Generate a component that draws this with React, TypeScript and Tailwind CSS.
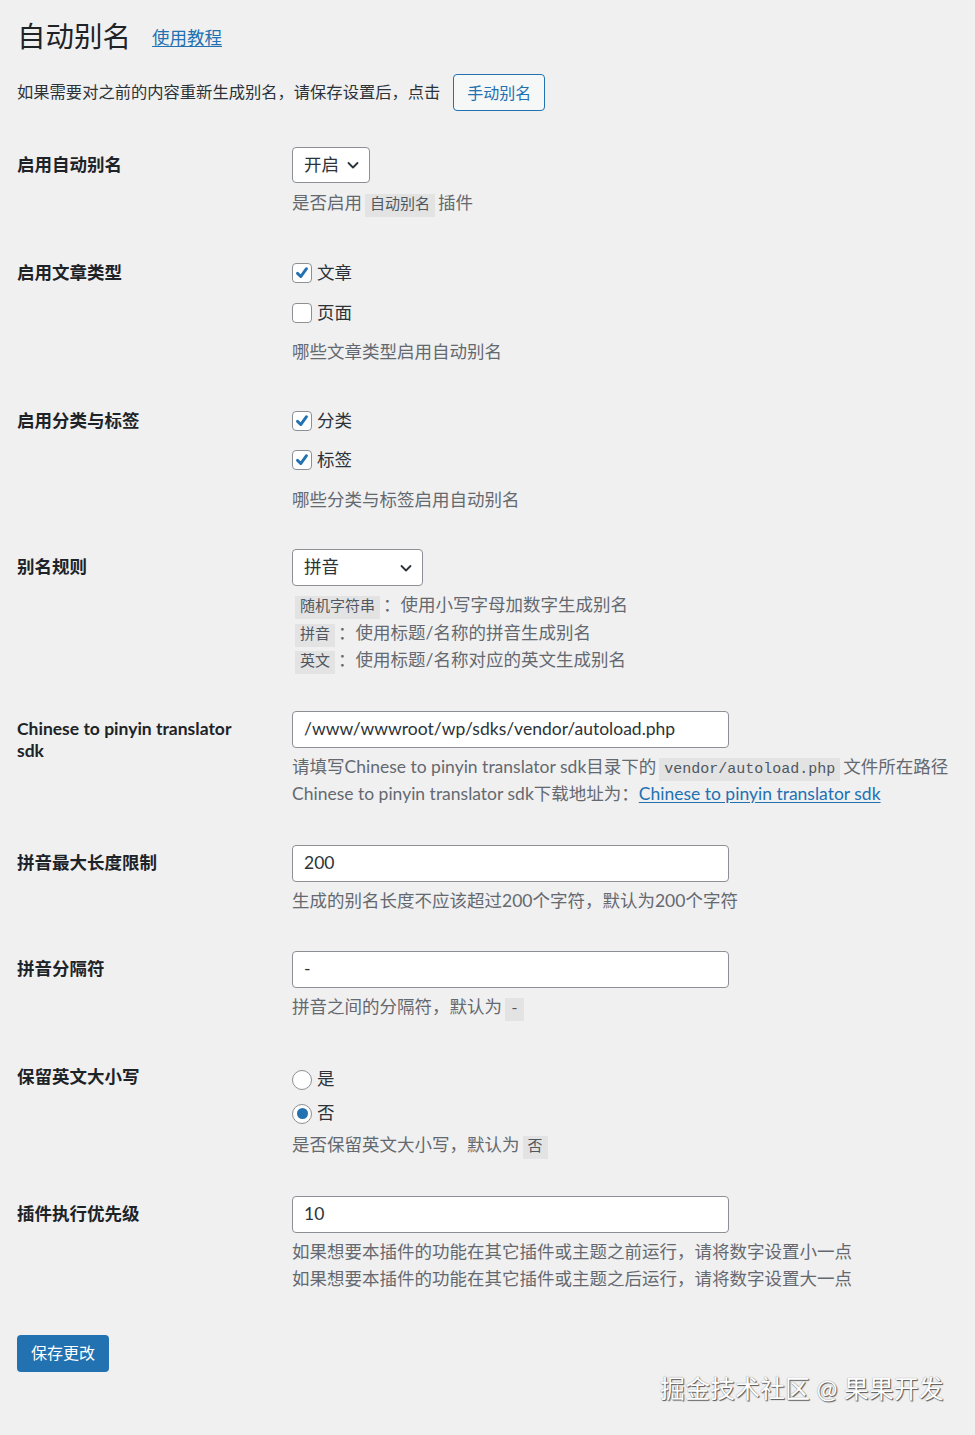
import type { ReactNode } from "react";

const font = { fontFamily: 'Lato, "Noto Sans CJK SC", sans-serif' };

const Code = ({ children }: { children: ReactNode }) => (
	<code className="bg-[#e3e3e4] px-[5px] py-[3px] mx-[3px] text-[15px] leading-none text-[#50575e] font-['Liberation_Mono','Noto_Sans_CJK_SC',monospace]">
		{children}
	</code>
);

const Chevron = () => (
	<svg width="16" height="16" viewBox="0 0 16 16" fill="none" className="shrink-0">
		<path d="M3.5 6 L8 10.5 L12.5 6" stroke="#2c3338" strokeWidth="1.8" strokeLinecap="round" strokeLinejoin="round" />
	</svg>
);

const Checkbox = ({ checked }: { checked?: boolean }) => (
	<span className="w-[20px] h-[20px] rounded-[4px] border border-[#8c8f94] bg-white flex items-center justify-center shrink-0">
		{checked && (
			<svg width="18" height="18" viewBox="0 0 20 20">
				<path d="M15 5.2 L8.6 14 L5 10.4" stroke="#2271b1" strokeWidth="3.2" fill="none" strokeLinecap="round" strokeLinejoin="round" />
			</svg>
		)}
	</span>
);

const Radio = ({ checked }: { checked?: boolean }) => (
	<span className="w-[20px] h-[20px] rounded-full border border-[#8c8f94] bg-white flex items-center justify-center shrink-0">
		{checked && <span className="w-[11px] h-[11px] rounded-full bg-[#2271b1]" />}
	</span>
);

const Row = ({
	label,
	labelMt,
	pt,
	pb,
	children,
}: {
	label: ReactNode;
	labelMt: string;
	pt: string;
	pb: string;
	children: ReactNode;
}) => (
	<div className={`flex ${pt} ${pb}`}>
		<div className="w-[275px] shrink-0 pr-[30px]">
			<div className={`text-[17.5px] font-bold text-[#1d2327] leading-[22px] w-[235px] ${labelMt}`}>{label}</div>
		</div>
		<div className="flex-1 min-w-0">{children}</div>
	</div>
);

const Desc = ({ children, className = "" }: { children: ReactNode; className?: string }) => (
	<p className={`text-[17.5px] text-[#646970] leading-[27px] whitespace-nowrap ${className}`}>{children}</p>
);

const TextInput = ({ value }: { value: string }) => (
	<div className="w-[437px] h-[37px] bg-white border border-[#8c8f94] rounded-[4px] px-[11px] flex items-center text-[17.5px] text-[#2c3338]">
		{value}
	</div>
);

const Check = ({ checked, label, className = "" }: { checked?: boolean; label: string; className?: string }) => (
	<label className={`flex items-center gap-[5px] h-[28px] text-[17.5px] text-[#2c3338] ${className}`}>
		<Checkbox checked={checked} />
		{label}
	</label>
);

export default function App() {
	return (
		<div className="min-h-screen bg-[#f0f0f1] relative" style={font}>
			<div className="px-[17px] pt-[14px]">
				<div className="flex items-center h-[44px]">
					<h1 className="text-[28.5px] text-[#1d2327] font-normal leading-none">自动别名</h1>
					<a className="ml-[21px] mt-[4px] text-[17.5px] text-[#2271b1] underline underline-offset-2">使用教程</a>
				</div>
				<div className="flex items-center mt-[16px]">
					<span className="text-[16.3px] text-[#2c3338]">如果需要对之前的内容重新生成别名，请保存设置后，点击</span>
					<button className="ml-[13px] h-[37px] px-[13px] rounded-[4px] border border-[#2271b1] bg-[#f6f7f7] text-[16px] text-[#2271b1]">
						手动别名
					</button>
				</div>

				<div className="mt-[36px]">
					<Row label="启用自动别名" labelMt="mt-[7px]" pt="pt-0" pb="pb-[20px]">
						<div className="w-[78px] h-[36px] bg-white border border-[#8c8f94] rounded-[4px] pl-[11px] pr-[8px] flex items-center justify-between text-[17.5px] text-[#2c3338]">
							开启
							<Chevron />
						</div>
						<Desc className="mt-[6px]">
							是否启用<Code>自动别名</Code>插件
						</Desc>
					</Row>

					<Row label="启用文章类型" labelMt="mt-[3px]" pt="pt-[23px]" pb="pb-[20px]">
						<Check checked label="文章" />
						<Check label="页面" className="mt-[12px]" />
						<Desc className="mt-[11px]">哪些文章类型启用自动别名</Desc>
					</Row>

					<Row label="启用分类与标签" labelMt="mt-[3px]" pt="pt-[22px]" pb="pb-[20px]">
						<Check checked label="分类" />
						<Check checked label="标签" className="mt-[11px]" />
						<Desc className="mt-[12px]">哪些分类与标签启用自动别名</Desc>
					</Row>

					<Row label="别名规则" labelMt="mt-[7px]" pt="pt-[16px]" pb="pb-[20px]">
						<div className="w-[131px] h-[37px] bg-white border border-[#8c8f94] rounded-[4px] pl-[11px] pr-[8px] flex items-center justify-between text-[17.5px] text-[#2c3338]">
							拼音
							<Chevron />
						</div>
						<div className="mt-[5px] text-[17.5px] text-[#646970] leading-[27.5px]">
							<p>
								<Code>随机字符串</Code>：使用小写字母加数字生成别名
							</p>
							<p>
								<Code>拼音</Code>：使用标题/名称的拼音生成别名
							</p>
							<p>
								<Code>英文</Code>：使用标题/名称对应的英文生成别名
							</p>
						</div>
					</Row>

					<Row label="Chinese to pinyin translator sdk" labelMt="mt-[7px]" pt="pt-[17px]" pb="pb-[20px]">
						<TextInput value="/www/wwwroot/wp/sdks/vendor/autoload.php" />
						<Desc className="mt-[5px]">
							请填写Chinese to pinyin translator sdk目录下的<Code>vendor/autoload.php</Code>文件所在路径
						</Desc>
						<Desc>
							Chinese to pinyin translator sdk下载地址为：
							<a className="text-[#2271b1] underline underline-offset-2">Chinese to pinyin translator sdk</a>
						</Desc>
					</Row>

					<Row label="拼音最大长度限制" labelMt="mt-[7px]" pt="pt-[18px]" pb="pb-[20px]">
						<TextInput value="200" />
						<Desc className="mt-[5px]">生成的别名长度不应该超过200个字符，默认为200个字符</Desc>
					</Row>

					<Row label="拼音分隔符" labelMt="mt-[7px]" pt="pt-[17px]" pb="pb-[20px]">
						<TextInput value="-" />
						<Desc className="mt-[5px]">
							拼音之间的分隔符，默认为<Code>-</Code>
						</Desc>
					</Row>

					<Row label="保留英文大小写" labelMt="mt-0" pt="pt-[26px]" pb="pb-[20px]">
						<label className="flex items-center gap-[5px] h-[28px] text-[17.5px] text-[#2c3338]">
							<Radio />是
						</label>
						<label className="flex items-center gap-[5px] h-[28px] mt-[6px] text-[17.5px] text-[#2c3338]">
							<Radio checked />否
						</label>
						<Desc className="mt-[3px]">
							是否保留英文大小写，默认为<Code>否</Code>
						</Desc>
					</Row>

					<Row label="插件执行优先级" labelMt="mt-[7px]" pt="pt-[18px]" pb="pb-[20px]">
						<TextInput value="10" />
						<Desc className="mt-[5px]">如果想要本插件的功能在其它插件或主题之前运行，请将数字设置小一点</Desc>
						<Desc>如果想要本插件的功能在其它插件或主题之后运行，请将数字设置大一点</Desc>
					</Row>
				</div>

				<button className="mt-[23px] h-[37px] w-[92px] rounded-[4px] bg-[#2271b1] text-white text-[16px]">保存更改</button>
			</div>

			<div className="absolute left-[660px] top-[1376px] text-[25px] text-white leading-none [text-shadow:1px_1px_1px_#555,0_0_1px_#777]">
				掘金技术社区 @ 果果开发
			</div>
		</div>
	);
}
